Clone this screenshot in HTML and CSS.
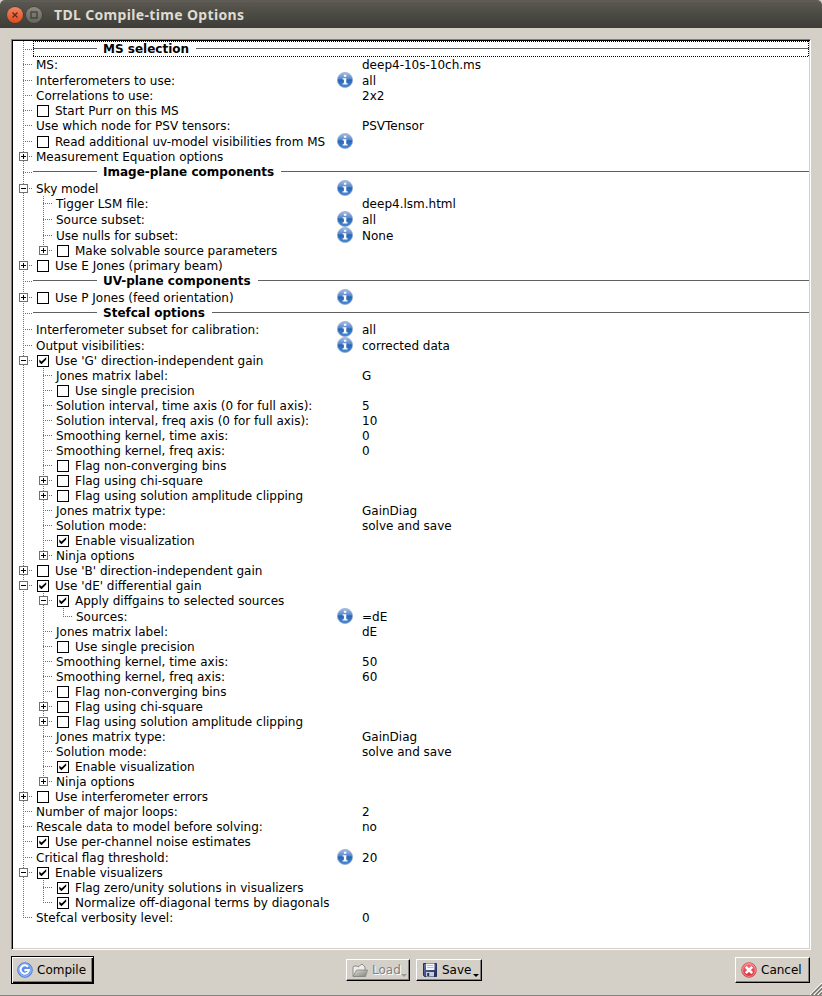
FILE: index.html
```html
<!DOCTYPE html>
<html lang="en">
<head>
<meta charset="utf-8">
<title>TDL Compile-time Options</title>
<link rel="stylesheet" href="styles.css">
</head>
<body>
<svg class="defs" width="0" height="0">
  <defs>
    <linearGradient id="gi" x1="0" y1="0" x2="0" y2="1"><stop offset="0" stop-color="#a9bfe2"/><stop offset=".4" stop-color="#5e8bcb"/><stop offset=".5" stop-color="#2766b5"/><stop offset="1" stop-color="#4a8ad4"/></linearGradient>
    <linearGradient id="gr" x1="0" y1="0" x2="0" y2="1"><stop offset="0" stop-color="#f27b83"/><stop offset="1" stop-color="#dd2330"/></linearGradient>
    <linearGradient id="gs" x1="0" y1="0" x2="1" y2="1"><stop offset="0" stop-color="#6876ad"/><stop offset="1" stop-color="#1c2659"/></linearGradient>
    <linearGradient id="gf" x1="0" y1="0" x2="1" y2="1"><stop offset="0" stop-color="#dcdbd6"/><stop offset="1" stop-color="#858580"/></linearGradient>
    <symbol id="info" viewBox="0 0 16 16"><circle cx="8" cy="8" r="7.6" fill="url(#gi)" stroke="#8ba8d3" stroke-width=".7"/><path d="M6.9 2.8h2.4v2H6.9zM5.7 6.3h3.6v5h1.3v1.3H5.6v-1.3h1.3V7.6H5.7z" fill="#fff"/></symbol>
    <symbol id="tick" viewBox="0 0 12 12"><path d="M2.3 4.5v2.7l2.2 2 4.7-4.7V2.2L4.5 6.6z" fill="#000"/></symbol>
  </defs>
</svg>
<header class="titlebar">
  <span class="wbtn close"><svg width="16" height="16"><path d="M5.5 5.5l5 5M10.5 5.5l-5 5" stroke="#5b2a18" stroke-width="1.2"/></svg></span>
  <span class="wbtn max"><svg width="16" height="16"><rect x="5" y="5" width="6" height="6" fill="none" stroke="#3b3a35" stroke-width="1.2"/></svg></span>
  <h1>TDL Compile-time Options</h1>
</header>
<main class="frame">
<ul class="tree">
<li><div class="row head focus"><b>MS selection</b></div></li>
<li><div class="row"><span class="l">MS:</span><span class="v">deep4-10s-10ch.ms</span></div></li>
<li><div class="row tall"><span class="l">Interferometers to use:</span><svg class="info"><use href="#info"/></svg><span class="v">all</span></div></li>
<li><div class="row"><span class="l">Correlations to use:</span><span class="v">2x2</span></div></li>
<li><div class="row"><i class="cb"></i><span class="l">Start Purr on this MS</span></div></li>
<li><div class="row"><span class="l">Use which node for PSV tensors:</span><span class="v">PSVTensor</span></div></li>
<li><div class="row tall"><i class="cb"></i><span class="l">Read additional uv-model visibilities from MS</span><svg class="info"><use href="#info"/></svg><span class="v"></span></div></li>
<li><div class="row"><i class="ex plus"></i><span class="l">Measurement Equation options</span></div></li>
<li><div class="row head"><b>Image-plane components</b></div></li>
<li><div class="row tall"><i class="ex"></i><span class="l">Sky model</span><svg class="info"><use href="#info"/></svg><span class="v"></span></div>
  <ul>
  <li><div class="row"><span class="l">Tigger LSM file:</span><span class="v">deep4.lsm.html</span></div></li>
  <li><div class="row tall"><span class="l">Source subset:</span><svg class="info"><use href="#info"/></svg><span class="v">all</span></div></li>
  <li><div class="row tall"><span class="l">Use nulls for subset:</span><svg class="info"><use href="#info"/></svg><span class="v">None</span></div></li>
  <li><div class="row"><i class="ex plus"></i><i class="cb"></i><span class="l">Make solvable source parameters</span></div></li>
  </ul></li>
<li><div class="row"><i class="ex plus"></i><i class="cb"></i><span class="l">Use E Jones (primary beam)</span></div></li>
<li><div class="row head"><b>UV-plane components</b></div></li>
<li><div class="row tall"><i class="ex plus"></i><i class="cb"></i><span class="l">Use P Jones (feed orientation)</span><svg class="info"><use href="#info"/></svg><span class="v"></span></div></li>
<li><div class="row head"><b>Stefcal options</b></div></li>
<li><div class="row tall"><span class="l">Interferometer subset for calibration:</span><svg class="info"><use href="#info"/></svg><span class="v">all</span></div></li>
<li><div class="row tall"><span class="l">Output visibilities:</span><svg class="info"><use href="#info"/></svg><span class="v">corrected data</span></div></li>
<li><div class="row"><i class="ex"></i><i class="cb"><svg><use href="#tick"/></svg></i><span class="l">Use 'G' direction-independent gain</span></div>
  <ul>
  <li><div class="row"><span class="l">Jones matrix label:</span><span class="v">G</span></div></li>
  <li><div class="row"><i class="cb"></i><span class="l">Use single precision</span></div></li>
  <li><div class="row"><span class="l">Solution interval, time axis (0 for full axis):</span><span class="v">5</span></div></li>
  <li><div class="row"><span class="l">Solution interval, freq axis (0 for full axis):</span><span class="v">10</span></div></li>
  <li><div class="row"><span class="l">Smoothing kernel, time axis:</span><span class="v">0</span></div></li>
  <li><div class="row"><span class="l">Smoothing kernel, freq axis:</span><span class="v">0</span></div></li>
  <li><div class="row"><i class="cb"></i><span class="l">Flag non-converging bins</span></div></li>
  <li><div class="row"><i class="ex plus"></i><i class="cb"></i><span class="l">Flag using chi-square</span></div></li>
  <li><div class="row"><i class="ex plus"></i><i class="cb"></i><span class="l">Flag using solution amplitude clipping</span></div></li>
  <li><div class="row"><span class="l">Jones matrix type:</span><span class="v">GainDiag</span></div></li>
  <li><div class="row"><span class="l">Solution mode:</span><span class="v">solve and save</span></div></li>
  <li><div class="row"><i class="cb"><svg><use href="#tick"/></svg></i><span class="l">Enable visualization</span></div></li>
  <li><div class="row"><i class="ex plus"></i><span class="l">Ninja options</span></div></li>
  </ul></li>
<li><div class="row"><i class="ex plus"></i><i class="cb"></i><span class="l">Use 'B' direction-independent gain</span></div></li>
<li><div class="row"><i class="ex"></i><i class="cb"><svg><use href="#tick"/></svg></i><span class="l">Use 'dE' differential gain</span></div>
  <ul>
  <li><div class="row"><i class="ex"></i><i class="cb"><svg><use href="#tick"/></svg></i><span class="l">Apply diffgains to selected sources</span></div>
    <ul>
    <li><div class="row tall"><span class="l">Sources:</span><svg class="info"><use href="#info"/></svg><span class="v">=dE</span></div></li>
    </ul></li>
  <li><div class="row"><span class="l">Jones matrix label:</span><span class="v">dE</span></div></li>
  <li><div class="row"><i class="cb"></i><span class="l">Use single precision</span></div></li>
  <li><div class="row"><span class="l">Smoothing kernel, time axis:</span><span class="v">50</span></div></li>
  <li><div class="row"><span class="l">Smoothing kernel, freq axis:</span><span class="v">60</span></div></li>
  <li><div class="row"><i class="cb"></i><span class="l">Flag non-converging bins</span></div></li>
  <li><div class="row"><i class="ex plus"></i><i class="cb"></i><span class="l">Flag using chi-square</span></div></li>
  <li><div class="row"><i class="ex plus"></i><i class="cb"></i><span class="l">Flag using solution amplitude clipping</span></div></li>
  <li><div class="row"><span class="l">Jones matrix type:</span><span class="v">GainDiag</span></div></li>
  <li><div class="row"><span class="l">Solution mode:</span><span class="v">solve and save</span></div></li>
  <li><div class="row"><i class="cb"><svg><use href="#tick"/></svg></i><span class="l">Enable visualization</span></div></li>
  <li><div class="row"><i class="ex plus"></i><span class="l">Ninja options</span></div></li>
  </ul></li>
<li><div class="row"><i class="ex plus"></i><i class="cb"></i><span class="l">Use interferometer errors</span></div></li>
<li><div class="row"><span class="l">Number of major loops:</span><span class="v">2</span></div></li>
<li><div class="row"><span class="l">Rescale data to model before solving:</span><span class="v">no</span></div></li>
<li><div class="row"><i class="cb"><svg><use href="#tick"/></svg></i><span class="l">Use per-channel noise estimates</span></div></li>
<li><div class="row tall"><span class="l">Critical flag threshold:</span><svg class="info"><use href="#info"/></svg><span class="v">20</span></div></li>
<li><div class="row"><i class="ex"></i><i class="cb"><svg><use href="#tick"/></svg></i><span class="l">Enable visualizers</span></div>
  <ul>
  <li><div class="row"><i class="cb"><svg><use href="#tick"/></svg></i><span class="l">Flag zero/unity solutions in visualizers</span></div></li>
  <li><div class="row"><i class="cb"><svg><use href="#tick"/></svg></i><span class="l">Normalize off-diagonal terms by diagonals</span></div></li>
  </ul></li>
<li><div class="row"><span class="l">Stefcal verbosity level:</span><span class="v">0</span></div></li>
</ul>
</main>
<footer class="buttons">
  <button class="btn compile"><svg width="16" height="16"><circle cx="8" cy="8" r="7.3" fill="#5b8def" stroke="#3f6fd0" stroke-width=".8"/><circle cx="8" cy="8" r="6.2" fill="none" stroke="#b9d0fb" stroke-width=".8"/><path d="M11 4.8A4.2 4.2 0 1 0 12 8H8.4v1.2" fill="none" stroke="#fff" stroke-width="2"/></svg>Compile</button>
  <div class="mid">
    <button class="btn load"><svg width="16" height="16"><path d="M1 14V5l1-1h3l1 1 4-3 3 3v9z" fill="#eeedeb" stroke="#8d8c86"/><path d="M1 14.5L4.5 8H15.5l-2 6.5z" fill="url(#gf)" stroke="#85847e" stroke-width=".8"/></svg>Load<i class="arrow"></i></button>
    <button class="btn save"><svg width="16" height="16"><path d="M1.5 1.5h13v13H2.5l-1-1z" fill="url(#gs)" stroke="#26305f"/><path d="M4 1.5h8.5v6.5H4z" fill="#f3f5fa"/><path d="M5 3.5h6.5M5 5.5h6.5" stroke="#a7b0c8" stroke-width=".8"/><path d="M4 10h8v4.5H4z" fill="#c8cddb"/><path d="M5.2 11h2v3h-2z" fill="#26305f"/></svg>Save<i class="arrow"></i></button>
  </div>
  <button class="btn cancel"><svg width="16" height="16"><circle cx="8" cy="8" r="7.3" fill="url(#gr)" stroke="#c8414a" stroke-width=".8"/><circle cx="8" cy="8" r="6.4" fill="none" stroke="#f6b5b9" stroke-width=".7"/><path d="M4.8 4.8l6.4 6.4M11.2 4.8l-6.4 6.4" stroke="#fff" stroke-width="2.6"/></svg>Cancel</button>
</footer>
<svg class="grip" width="12" height="12"><path d="M0 12L12 0M4 12L12 4M8 12L12 8" stroke="#fff" stroke-width="1.2"/><path d="M1.5 12L12 1.5M5.5 12L12 5.5M9.5 12L12 9.5" stroke="#77756f" stroke-width="1.6"/></svg>
</body>
</html>
```
FILE: styles.css
```css
* { box-sizing: border-box; }
html { background: #d4d0c8; }
body {
  margin: 0;
  width: 822px;
  height: 996px;
  position: relative;
  display: flex;
  flex-direction: column;
  overflow: hidden;
  background: #d4d0c8;
  border-bottom: 1px solid #85827c;
  font: 12px/15px "DejaVu Sans", sans-serif;
  color: #000;
}
.defs { position: absolute; }
.titlebar {
  height: 28px;
  flex: none;
  display: flex;
  align-items: center;
  padding: 1px 0 0 7px;
  background: linear-gradient(#55534b, #64625a 1px, #59574f 2px, #3d3c37);
  border-radius: 5px 5px 0 0;
}
.titlebar h1 {
  margin: 0 0 0 12px;
  font: bold 14px/20px "Noto Sans", sans-serif;
  letter-spacing: .34px;
  color: #dfdbd2;
  white-space: nowrap;
}
.wbtn { width: 16px; height: 16px; border-radius: 50%; box-shadow: 0 0 0 .5px #33322e; }
.wbtn svg { display: block; }
.close { background: linear-gradient(#f58462, #dd4a1c); }
.max { margin-left: 3px; background: linear-gradient(#8b897f, #66645b); }

.frame {
  width: 800px;
  height: 911px;
  flex: none;
  margin: 11px 0 0 11px;
  background: #fff;
  border: 1px solid;
  border-color: #808080 #fff #fff #808080;
  box-shadow: inset 1px 1px #000, inset -1px -1px #d4d0c8;
  padding: 1px;
}
ul { list-style: none; margin: 0; padding: 0; position: relative; }
ul ul { margin-left: 20px; }
ul::before {
  content: "";
  position: absolute;
  left: 10px;
  top: 0;
  bottom: 7px;
  width: 1px;
  background: repeating-linear-gradient(#707070 0 1px, transparent 1px 2px);
}
.row {
  height: 15px;
  display: flex;
  align-items: center;
  position: relative;
  padding-left: 23px;
  white-space: nowrap;
}
.row::before {
  content: "";
  position: absolute;
  left: 10px;
  top: 7px;
  width: 10px;
  height: 1px;
  background: repeating-linear-gradient(90deg, #707070 0 1px, transparent 1px 2px);
}
.tall, .head { height: 16px; }
.tall::before, .head::before { top: 8px; }
.l { flex: 1; }
.l, .v { padding-top: 2px; }
.tall .l, .tall .v { padding-top: 3px; }
.v { width: 447px; }
.info { width: 16px; height: 16px; margin-right: 9px; flex: none; }
.cb {
  width: 12px;
  height: 12px;
  flex: none;
  margin: 1px 6px 0 1px;
  border: 1px solid #000;
  background: #fff;
}
.tall .cb { margin-top: 2px; }
.cb svg { display: block; width: 12px; height: 12px; margin: -1px; }
.ex {
  position: absolute;
  left: 6px;
  top: 3px;
  width: 9px;
  height: 9px;
  border: 1px solid #707070;
  background: linear-gradient(#000, #000) center / 5px 1px no-repeat, #fff;
}
.plus {
  background: linear-gradient(#000, #000) center / 5px 1px no-repeat,
    linear-gradient(#000, #000) center / 1px 5px no-repeat, #fff;
}
.tall .ex { top: 4px; }
.head { padding-left: 20px; }
.head b { flex: 1; display: flex; align-items: flex-start; height: 16px; padding-top: 1px; }
.head b::before, .head b::after { content: ""; height: 1px; margin-top: 6px; background: #606060; }
.head b::before { width: 64px; margin-right: 6px; }
.head b::after { flex: 1; margin-left: 7px; }
.focus::after {
  content: "";
  position: absolute;
  inset: 0 0 0 20px;
  background:
    repeating-linear-gradient(90deg, #000 0 1px, transparent 1px 2px) top / 100% 1px no-repeat,
    repeating-linear-gradient(90deg, #000 0 1px, transparent 1px 2px) bottom / 100% 1px no-repeat,
    repeating-linear-gradient(#000 0 1px, transparent 1px 2px) left / 1px 100% no-repeat,
    repeating-linear-gradient(#000 0 1px, transparent 1px 2px) right / 1px 100% no-repeat;
}

.buttons {
  display: flex;
  justify-content: space-between;
  align-items: center;
  margin-top: 6px;
  height: 28px;
  padding: 0 12px 0 11px;
}
.mid { display: flex; gap: 6px; margin-left: -1px; }
.btn {
  display: flex;
  align-items: center;
  gap: 4px;
  position: relative;
  font: inherit;
  color: #000;
  background: #d4d0c8;
  border: 1px solid;
  border-color: #fff #000 #000 #fff;
  box-shadow: inset -1px -1px #808080;
  border-radius: 0;
  padding: 0 0 0 5px;
  height: 26px;
  white-space: nowrap;
}
.btn svg { flex: none; }
.compile {
  width: 83px;
  height: 28px;
  border-color: #000;
  box-shadow: inset 1px 1px #fff, inset -1px -1px #000, inset -2px -2px #808080;
}
.load, .save { height: 22px; width: 64px; }
.load { color: #808080; text-shadow: 1px 1px #fff; }
.save { width: 66px; }
.cancel { width: 75px; }
.arrow {
  position: absolute;
  right: 2px;
  bottom: 3px;
  border: solid transparent;
  border-width: 3px 3px 0;
  border-top-color: #000;
}
.load .arrow { border-top-color: #999; }
.grip { position: absolute; right: 0; bottom: 0; }
```
